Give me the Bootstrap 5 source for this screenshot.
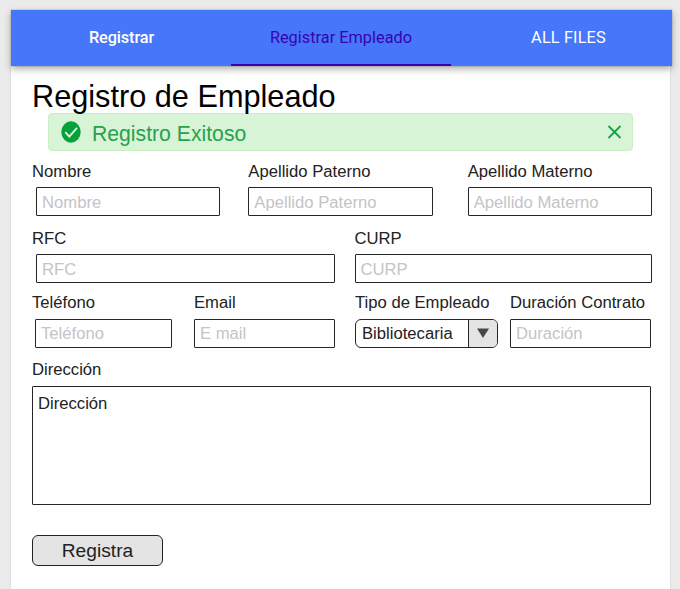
<!DOCTYPE html>
<html lang="es">
<head>
<meta charset="utf-8">
<meta name="viewport" content="width=device-width, initial-scale=1">
<title>Registro de Empleado</title>
<link href="https://cdn.jsdelivr.net/npm/bootstrap@5.3.0/dist/css/bootstrap.min.css" rel="stylesheet">
<style>
body{background:#ebebeb;font-family:"Liberation Sans",Arial,sans-serif;font-size:16.65px;color:#222;overflow:hidden}
.page-shell{width:661px;height:579px;margin:10px 0 0 11px}
.tab-bar{height:56px;background:#4676fa;box-shadow:0 0 1px rgba(0,0,0,.45),0 3px 7px rgba(0,0,0,.32);font-family:Roboto,sans-serif;font-size:16.3px;z-index:1}
.tab-bar .nav-link{color:#fff;font-weight:500;width:220px;height:56px;padding:0;border-bottom:2px solid transparent;border-radius:0;letter-spacing:-.12px;padding-top:2px;padding-left:1px}
.tab-bar .nav-link.active{color:#3705b0;border-bottom-color:#3a00ad;font-weight:400;letter-spacing:.03px;padding-left:0}
.tab-bar .nav-link.files{font-weight:400;letter-spacing:.16px;padding-left:15px}
.panel{width:659px;height:523px;background:#fefefe;padding:13px 18px 0 21px;box-shadow:0 0 2px rgba(0,0,0,.15)}
h1{font-size:30.7px;line-height:34px;color:#000;padding-top:1px;height:34px}
.notice{width:585px;height:38px;margin-left:16px;padding:0 10px 0 12px;background:#d8f4d6;border:1px solid #cbefc5;border-radius:4px;color:#26a24c;font-size:21.2px;line-height:34px}
.notice svg{flex:none}
.notice-text{padding-top:3px;margin-left:11px}
label{display:block;height:26px;line-height:20px;padding-top:1px;white-space:nowrap}
.names{margin-top:10px}
.ids{margin-top:12px}
.details{margin-top:9px;padding-left:3px}
.details label{height:27px}
.w-name{width:185px}
.w-rfc{width:299px}
.w-curp{width:298px}
.w-tel{width:137px}
.w-small{width:141px}
.w-kind{width:143px}
.gap-a{margin-right:28px}
.gap-b{margin-right:35px}
.gap-c{margin-right:20px}
.gap-d{margin-right:22px}
.gap-e{margin-right:12px}
.form-line .form-control,.address{border:1px solid #262626;border-radius:1px;background-color:#fff;font-size:16.65px;line-height:20px;color:#222}
.form-line .form-control{height:29px;padding:5px 5px 2px}
.form-line.details .form-control{padding:4px 5px 3px}
.form-control::placeholder{color:#c4c4c8;opacity:1}
.first label{margin-left:-4px}
.details .first label{margin-left:-3px}
.picker{height:29px;border:1px solid #262626;border-radius:6px;overflow:hidden;background:#fff;line-height:28px}
.picker-value{padding-left:6px}
.picker .arrow{width:29px;background:#e4e4e4;border-left:1px solid #262626}
.address-line{margin-top:11px}
.address-line label{height:27px}
.address{width:619px;height:119px;padding:7px 5px 5px;resize:none}
.submit{width:131px;height:31px;margin-top:30px;padding:0;background:#e4e4e4;border:1px solid #222;border-radius:6px;font-size:19.2px;line-height:27px;color:#222}
</style>
</head>
<body>
<div class="page-shell">
  <nav class="tab-bar nav d-flex position-relative">
    <a class="nav-link d-flex align-items-center justify-content-center" href="#">Registrar</a>
    <a class="nav-link active d-flex align-items-center justify-content-center" href="#">Registrar Empleado</a>
    <a class="nav-link files d-flex align-items-center justify-content-center" href="#">ALL FILES</a>
  </nav>
  <main class="panel">
    <h1 class="fw-normal mb-0">Registro de Empleado</h1>
    <div class="notice d-flex align-items-center" role="status">
      <svg width="20" height="22" viewBox="0 0 20 22"><ellipse cx="10" cy="11" rx="9.7" ry="10.7" fill="#05a23c"/><path d="M4.3 11.2 8.3 15.6 16 6.8" fill="none" stroke="#d8f4d6" stroke-width="2"/></svg>
      <span class="flex-grow-1 notice-text">Registro Exitoso</span>
      <svg width="15" height="16" viewBox="0 0 15 16"><path d="M1.5 2 13.5 14M13.5 2 1.5 14" fill="none" stroke="#10a343" stroke-width="1.8"/></svg>
    </div>
    <form>
      <div class="form-line names d-flex ps-1">
        <div class="first w-name gap-a"><label for="nombre">Nombre</label><input class="form-control" id="nombre" placeholder="Nombre"></div>
        <div class="w-name gap-b"><label for="paterno">Apellido Paterno</label><input class="form-control" id="paterno" placeholder="Apellido Paterno"></div>
        <div class="w-name"><label for="materno">Apellido Materno</label><input class="form-control" id="materno" placeholder="Apellido Materno"></div>
      </div>
      <div class="form-line ids d-flex ps-1">
        <div class="first w-rfc gap-c"><label for="rfc">RFC</label><input class="form-control" id="rfc" placeholder="RFC"></div>
        <div class="w-curp"><label for="curp">CURP</label><input class="form-control" id="curp" placeholder="CURP"></div>
      </div>
      <div class="form-line details d-flex">
        <div class="first w-tel gap-d"><label for="tel">Teléfono</label><input class="form-control" id="tel" placeholder="Teléfono"></div>
        <div class="w-small gap-c"><label for="email">Email</label><input class="form-control" id="email" placeholder="E mail"></div>
        <div class="w-kind gap-e"><label>Tipo de Empleado</label>
          <div class="picker d-flex" role="combobox" aria-label="Tipo de Empleado" tabindex="0"><span class="flex-grow-1 picker-value">Bibliotecaria</span><span class="arrow d-flex align-items-center justify-content-center"><svg width="12" height="11" viewBox="0 0 12 11"><path d="M0 .5H12L6 10Z" fill="#484848"/></svg></span></div>
        </div>
        <div class="w-small"><label for="duracion">Duración Contrato</label><input class="form-control" id="duracion" placeholder="Duración"></div>
      </div>
      <div class="address-line"><label for="direccion">Dirección</label><textarea class="form-control address" id="direccion">Dirección</textarea></div>
      <button class="btn submit d-block" type="button">Registra</button>
    </form>
  </main>
</div>
<script src="https://cdn.jsdelivr.net/npm/bootstrap@5.3.0/dist/js/bootstrap.bundle.min.js"></script>
</body>
</html>
